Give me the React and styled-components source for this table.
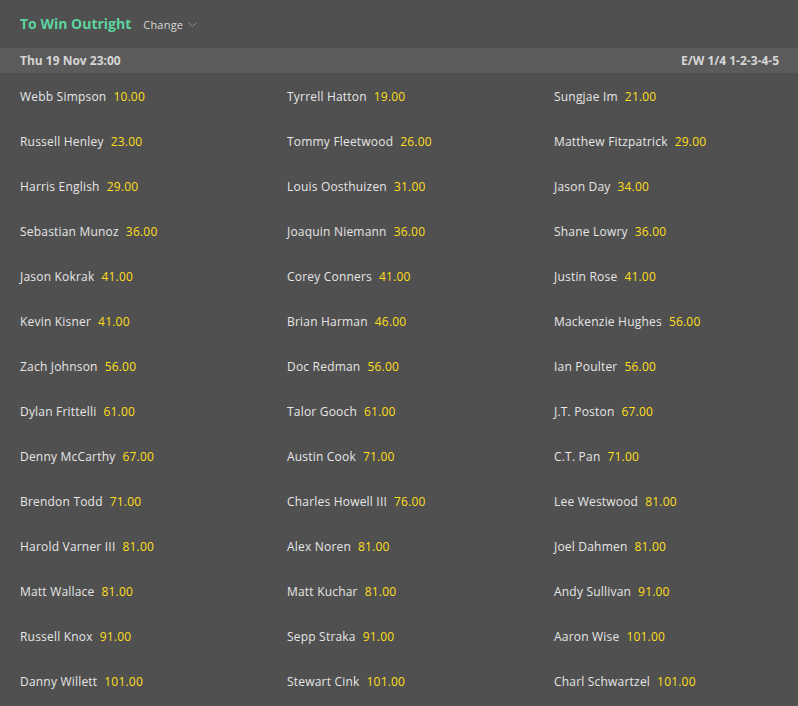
import React from "react";
import styled, { createGlobalStyle } from "styled-components";

const GlobalStyle = createGlobalStyle`
  body {
    margin: 0;
    background: #505050;
    font-family: "Open Sans", "DejaVu Sans", sans-serif;
  }
`;

const Page = styled.div`
  width: 798px;
  height: 706px;
  background: #505050;
  overflow: hidden;
`;

const TopBar = styled.div`
  height: 48px;
  display: flex;
  align-items: center;
  padding: 0 20px;
`;

const Title = styled.div`
  font-weight: bold;
  font-size: 14px;
  color: #5ed3a0;
  margin-right: 12px;
  padding-bottom: 1px;
`;

const Change = styled.div`
  display: flex;
  align-items: center;
  gap: 5px;
  font-size: 11px;
  letter-spacing: 0.2px;
  color: #d8d8d8;
  padding-top: 1px;
`;

const DateBar = styled.div`
  height: 25px;
  background: #5b5b5b;
  display: flex;
  align-items: center;
  justify-content: space-between;
  padding: 0 19px 0 20px;
  font-size: 12px;
  font-weight: bold;
  color: #d6d6d6;
`;

const Grid = styled.div`
  display: grid;
  grid-template-columns: 267px 267px 1fr;
  grid-auto-rows: 45px;
  padding: 1px 0 0 20px;
`;

const Cell = styled.div`
  display: flex;
  align-items: center;
  gap: 7px;
  font-size: 12px;
  letter-spacing: 0.2px;
  white-space: nowrap;
`;

const Name = styled.span`
  color: #e6e6e6;
`;

const Price = styled.span`
  color: #ffdf1b;
`;

const runners = [
  ["Webb Simpson", "10.00"], ["Tyrrell Hatton", "19.00"], ["Sungjae Im", "21.00"],
  ["Russell Henley", "23.00"], ["Tommy Fleetwood", "26.00"], ["Matthew Fitzpatrick", "29.00"],
  ["Harris English", "29.00"], ["Louis Oosthuizen", "31.00"], ["Jason Day", "34.00"],
  ["Sebastian Munoz", "36.00"], ["Joaquin Niemann", "36.00"], ["Shane Lowry", "36.00"],
  ["Jason Kokrak", "41.00"], ["Corey Conners", "41.00"], ["Justin Rose", "41.00"],
  ["Kevin Kisner", "41.00"], ["Brian Harman", "46.00"], ["Mackenzie Hughes", "56.00"],
  ["Zach Johnson", "56.00"], ["Doc Redman", "56.00"], ["Ian Poulter", "56.00"],
  ["Dylan Frittelli", "61.00"], ["Talor Gooch", "61.00"], ["J.T. Poston", "67.00"],
  ["Denny McCarthy", "67.00"], ["Austin Cook", "71.00"], ["C.T. Pan", "71.00"],
  ["Brendon Todd", "71.00"], ["Charles Howell III", "76.00"], ["Lee Westwood", "81.00"],
  ["Harold Varner III", "81.00"], ["Alex Noren", "81.00"], ["Joel Dahmen", "81.00"],
  ["Matt Wallace", "81.00"], ["Matt Kuchar", "81.00"], ["Andy Sullivan", "91.00"],
  ["Russell Knox", "91.00"], ["Sepp Straka", "91.00"], ["Aaron Wise", "101.00"],
  ["Danny Willett", "101.00"], ["Stewart Cink", "101.00"], ["Charl Schwartzel", "101.00"],
];

const Chevron = () => (
  <svg width="9" height="6" viewBox="0 0 9 6">
    <path d="M0.5 0.5 L4.5 4.5 L8.5 0.5" fill="none" stroke="#8a8a8a" strokeWidth="1" />
  </svg>
);

const App = () => {
  return (
    <Page>
      <GlobalStyle />
      <TopBar>
        <Title>To Win Outright</Title>
        <Change>
          Change <Chevron />
        </Change>
      </TopBar>
      <DateBar>
        <span>Thu 19 Nov 23:00</span>
        <span>E/W 1/4 1-2-3-4-5</span>
      </DateBar>
      <Grid>
        {runners.map(([name, price]) => (
          <Cell key={name}>
            <Name>{name}</Name>
            <Price>{price}</Price>
          </Cell>
        ))}
      </Grid>
    </Page>
  );
};

export default App;
